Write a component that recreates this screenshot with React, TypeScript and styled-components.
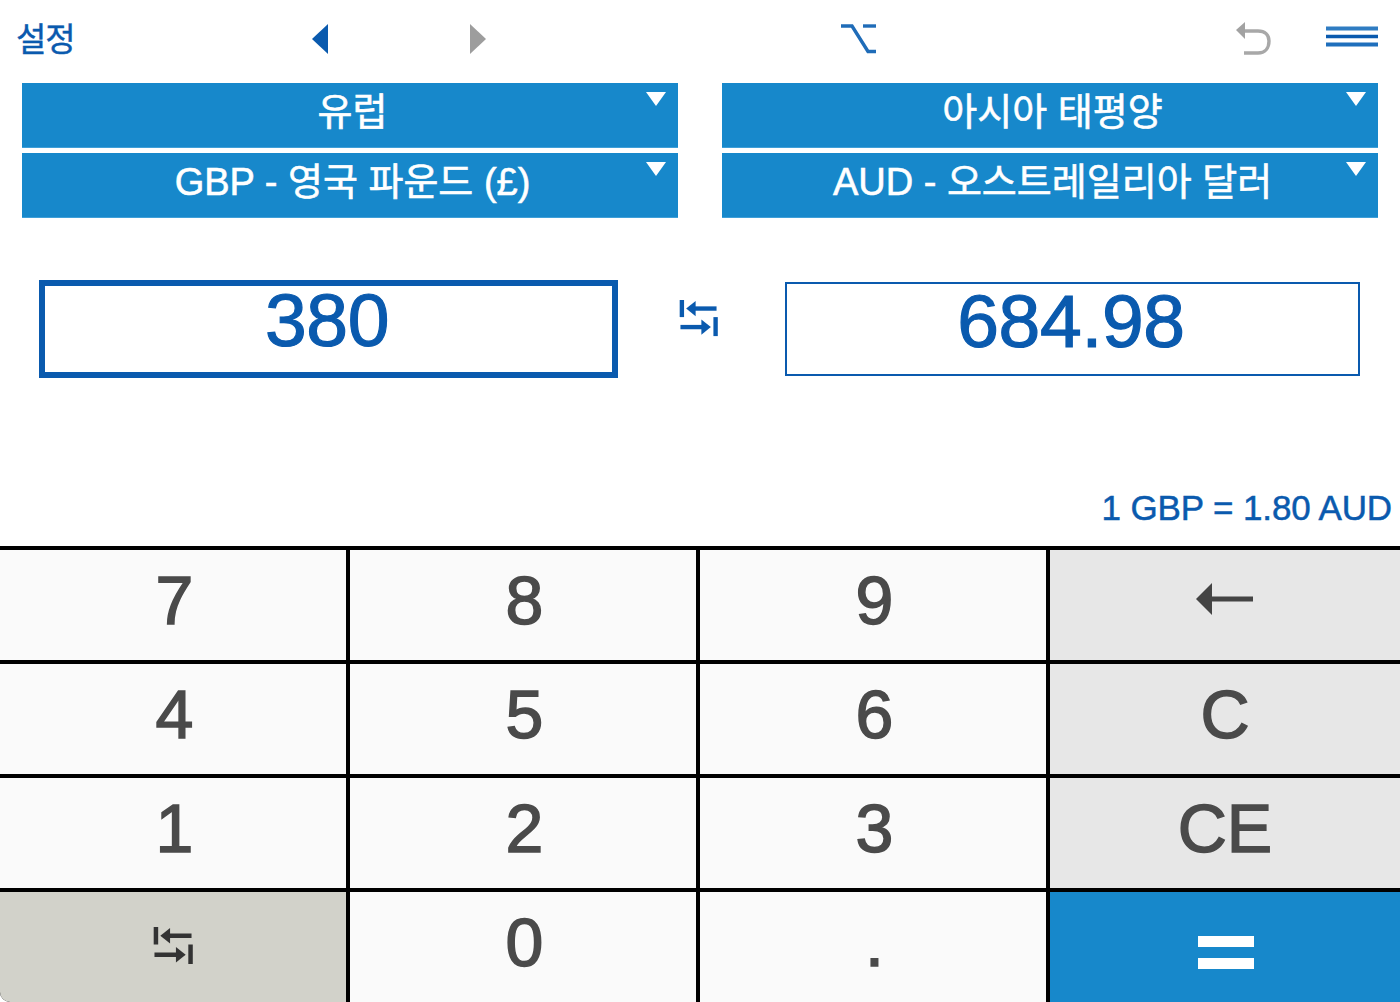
import React from "react";
import styled, { createGlobalStyle } from "styled-components";

const Global = createGlobalStyle`
  html, body { margin: 0; padding: 0; background: #fff; }
  body { font-family: "Liberation Sans", "Noto Sans CJK KR", Arial, sans-serif; }
`;

const Page = styled.div`
  width: 1400px;
  height: 1002px;
  overflow: hidden;
  display: flex;
  flex-direction: column;
  background: #fff;
`;

const Toolbar = styled.div`
  height: 83px;
  padding: 0 0 6px 16px;
  box-sizing: border-box;
  display: grid;
  grid-template-columns: 296px 158px 371px 395px 90px 52px;
  align-items: center;
`;

const SettingsLabel = styled.div`
  font-size: 33px;
  line-height: 60px;
  margin-top: 3px;
  letter-spacing: -1px;
  color: #0a5aae;
  -webkit-text-stroke: 0.4px #0a5aae;
`;

const ToolIcon = styled.svg`
  display: block;
  overflow: visible;
`;

const Selectors = styled.div`
  display: grid;
  grid-template-columns: 656px 656px;
  column-gap: 44px;
  padding: 0 22px;
`;

const SelectColumn = styled.div`
  display: flex;
  flex-direction: column;
  gap: 5px;
`;

const Select = styled.div`
  position: relative;
  height: 65px;
  box-sizing: border-box;
  padding-left: 5px;
  background: #1788cb;
  border-bottom: 1px solid #3f9fd8;
  color: #fff;
  font-size: 38px;
  line-height: 59px;
  text-align: center;
  -webkit-text-stroke: 0.6px #fff;
`;

const Caret = styled.span`
  position: absolute;
  top: 9px;
  right: 12px;
  width: 0;
  height: 0;
  border-left: 10px solid transparent;
  border-right: 10px solid transparent;
  border-top: 14px solid #fff;
`;

const Converter = styled.div`
  display: grid;
  grid-template-columns: 579px 167px 575px;
  align-items: center;
  padding: 61px 0 0 39px;
  height: 99px;
`;

const Amount = styled.div<{ $active?: boolean }>`
  box-sizing: border-box;
  height: ${(p) => (p.$active ? 98 : 94)}px;
  padding-right: 3px;
  border: ${(p) => (p.$active ? 6 : 2)}px solid #0a5aae;
  color: #0a5aae;
  font-size: 75px;
  line-height: ${(p) => (p.$active ? 68 : 74)}px;
  text-align: center;
  letter-spacing: -0.3px;
  -webkit-text-stroke: 1.2px #0a5aae;
`;

const SwapSlot = styled.div`
  display: flex;
  justify-content: flex-start;
  padding-left: 60px;
  margin-top: -19px;
`;

const Rate = styled.div`
  margin-top: 107px;
  height: 61px;
  padding-right: 8px;
  text-align: right;
  color: #0a5aae;
  font-size: 35px;
  line-height: 46px;
  letter-spacing: -0.1px;
  -webkit-text-stroke: 0.5px #0a5aae;
`;

const Keypad = styled.div`
  flex: 1;
  display: grid;
  grid-template-columns: 346px 346px 346px 350px;
  grid-template-rows: 110px 110px 110px 110px;
  gap: 4px;
  padding-top: 4px;
  background: #000;
  border-bottom-left-radius: 10px;
  overflow: hidden;
`;

type Tone = "digit" | "func" | "swap" | "equals";
const toneBg: Record<Tone, string> = {
  digit: "#fafafa",
  func: "#e7e7e7",
  swap: "#d2d2ca",
  equals: "#1788cb",
};

const Key = styled.div<{ $tone?: Tone }>`
  display: flex;
  align-items: flex-start;
  justify-content: center;
  box-sizing: border-box;
  padding-left: ${(p) => (p.$tone ? 0 : 3)}px;
  background: ${(p) => toneBg[p.$tone ?? "digit"]};
  color: #4a4a4a;
  font-size: 68px;
  line-height: 101px;
  -webkit-text-stroke: 1.5px #4a4a4a;
`;

const KeyGlyph = styled.svg<{ $top: number; $left?: number }>`
  display: block;
  margin-top: ${(p) => p.$top}px;
  margin-left: ${(p) => p.$left ?? 0}px;
`;

const SwapIcon = ({ color, w, h }: { color: string; w: number; h: number }) => (
  <ToolIcon width={w} height={h} viewBox="0 0 40 40" fill="none">
    <path d="M2.500 0V18" stroke={color} strokeWidth="4.600" />
    <path d="M38 18V38" stroke={color} strokeWidth="4.600" />
    <path d="M13 9H39" stroke={color} strokeWidth="4.600" />
    <path d="M1 28.500H27" stroke={color} strokeWidth="4.600" />
    <path d="M7 9L17 1V17Z" fill={color} />
    <path d="M33 28.500L23 20.500V36.500Z" fill={color} />
  </ToolIcon>
);

const Triangle = ({ left, color }: { left?: boolean; color: string }) => (
  <ToolIcon width="16" height="30" viewBox="0 0 16 30">
    <path d={left ? "M16 0V30L0 15Z" : "M0 0V30L16 15Z"} fill={color} />
  </ToolIcon>
);

const digits = (s: string) => <Key>{s}</Key>;

export default function App() {
  return (
    <Page>
      <Global />
      <Toolbar>
        <SettingsLabel>설정</SettingsLabel>
        <Triangle left color="#0a5aae" />
        <Triangle color="#9d9d9d" />
        <ToolIcon width="35" height="30" viewBox="0 0 35 30" fill="none">
          <path d="M0 2H11L27 27.500H35" stroke="#1f6cb8" strokeWidth="3.4" />
          <path d="M22 2H35" stroke="#1f6cb8" strokeWidth="3.4" />
        </ToolIcon>
        <ToolIcon width="36" height="36" viewBox="0 0 36 36" fill="none">
          <path d="M8 10H22C29 10 33 14 33 20C33 27 29 32 22 32H8" stroke="#a8a8a8" strokeWidth="3.4" />
          <path d="M0 9L9 1V18Z" fill="#a2a2a2" />
        </ToolIcon>
        <ToolIcon width="52" height="25" viewBox="0 0 52 25" fill="none">
          <path d="M0 2.500H52" stroke="#2f7cc2" strokeWidth="4" />
          <path d="M0 10.500H52" stroke="#0a5aae" strokeWidth="3.500" />
          <path d="M0 18.500H52" stroke="#1f6fbc" strokeWidth="4" />
        </ToolIcon>
      </Toolbar>

      <Selectors>
        <SelectColumn>
          <Select>유럽<Caret /></Select>
          <Select>GBP - 영국 파운드 (£)<Caret /></Select>
        </SelectColumn>
        <SelectColumn>
          <Select>아시아 태평양<Caret /></Select>
          <Select>AUD - 오스트레일리아 달러<Caret /></Select>
        </SelectColumn>
      </Selectors>

      <Converter>
        <Amount $active>380</Amount>
        <SwapSlot>
          <SwapIcon color="#0a5aae" w={41} h={38} />
        </SwapSlot>
        <Amount>684.98</Amount>
      </Converter>

      <Rate>1 GBP = 1.80 AUD</Rate>

      <Keypad>
        {digits("7")}
        {digits("8")}
        {digits("9")}
        <Key $tone="func">
          <KeyGlyph $top={33} width="58" height="32" viewBox="0 0 58 32">
            <path d="M16 0V32L0 16Z" fill="#444" />
            <path d="M14 16H57" stroke="#444" strokeWidth="5" />
          </KeyGlyph>
        </Key>
        {digits("4")}
        {digits("5")}
        {digits("6")}
        <Key $tone="func">C</Key>
        {digits("1")}
        {digits("2")}
        {digits("3")}
        <Key $tone="func">CE</Key>
        <Key $tone="swap">
          <KeyGlyph as="div" $top={35}>
            <SwapIcon color="#333" w={40} h={39} />
          </KeyGlyph>
        </Key>
        {digits("0")}
        {digits(".")}
        <Key $tone="equals">
          <KeyGlyph $top={44} $left={1} width="56" height="33" viewBox="0 0 56 33">
            <path d="M0 0H56V11H0ZM0 22H56V33H0Z" fill="#fff" />
          </KeyGlyph>
        </Key>
      </Keypad>
    </Page>
  );
}
